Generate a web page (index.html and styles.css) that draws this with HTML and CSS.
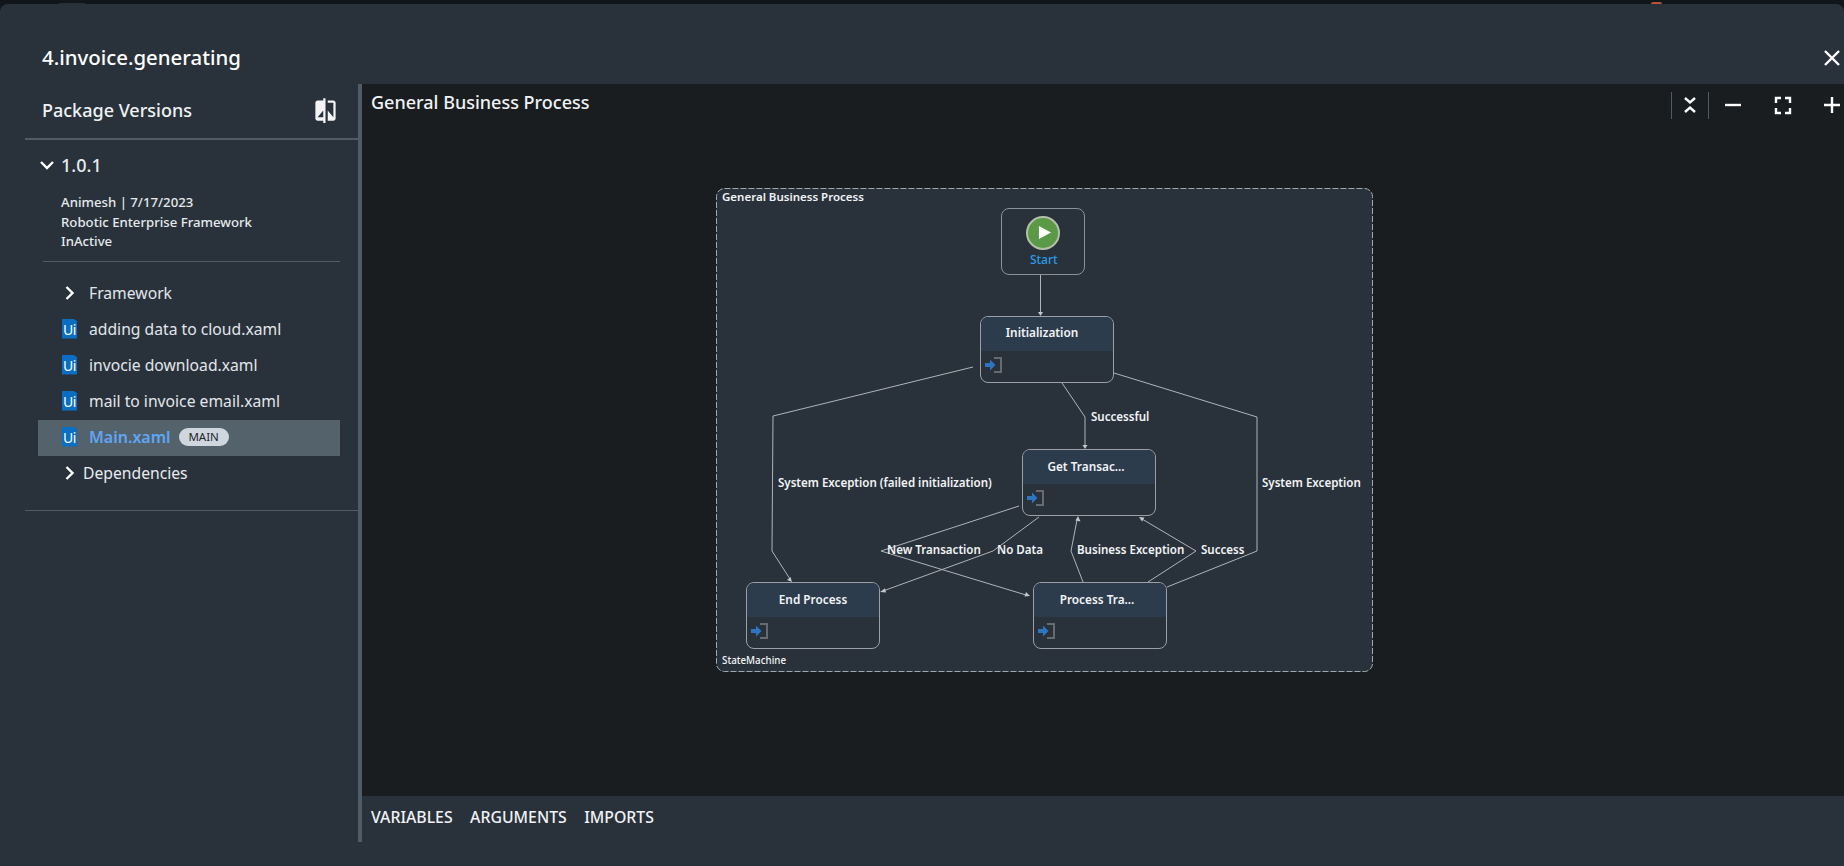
FILE: index.html
```html
<!DOCTYPE html>
<html>
<head>
<meta charset="utf-8">
<title>4.invoice.generating</title>
<link rel="stylesheet" href="styles.css">
</head>
<body>
<div class="backdrop"><span class="blob-grey"></span><span class="blob-red"></span></div>
<div class="modal">
	<div class="modal-head">
		<div class="modal-title">4.invoice.generating</div>
		<svg class="ico" viewBox="0 0 24 24"><path d="M5 5l14 14M19 5L5 19" class="line-w2"/></svg>
	</div>
	<div class="modal-body">
		<div class="sidebar">
			<div class="side-head">
				<span>Package Versions</span>
				<svg class="compare" viewBox="0 0 24 24"><path d="M10 3H5c-1.1 0-2 .9-2 2v14c0 1.1.9 2 2 2h5v2h2V1h-2v2zm0 15H5l5-6v6zm9-15h-5v2h5v13l-5-6v9h5c1.1 0 2-.9 2-2V5c0-1.1-.9-2-2-2z"/></svg>
			</div>
			<div class="version">
				<svg class="chev-down" viewBox="0 0 14 10"><path d="M1 2l6 6 6-6" class="line-w2"/></svg>
				<span>1.0.1</span>
			</div>
			<div class="details">
				<div>Animesh | 7/17/2023</div>
				<div>Robotic Enterprise Framework</div>
				<div>InActive</div>
			</div>
			<div class="rule-short"></div>
			<div class="tree">
				<div class="row">
					<svg class="chev-right" viewBox="0 0 12 16"><path d="M3 2l6 6-6 6" class="line-w2"/></svg>
					<span>Framework</span>
				</div>
				<div class="row"><span class="ui-file">Ui</span><span>adding data to cloud.xaml</span></div>
				<div class="row"><span class="ui-file">Ui</span><span>invocie download.xaml</span></div>
				<div class="row"><span class="ui-file">Ui</span><span>mail to invoice email.xaml</span></div>
				<div class="row selected"><span class="ui-file">Ui</span><span class="main-name">Main.xaml</span><span class="badge">MAIN</span></div>
				<div class="row row-deps">
					<svg class="chev-right" viewBox="0 0 12 16"><path d="M3 2l6 6-6 6" class="line-w2"/></svg>
					<span>Dependencies</span>
				</div>
			</div>
			<div class="rule-long"></div>
		</div>
		<div class="main">
			<div class="canvas">
				<div class="canvas-head">
					<div class="canvas-title">General Business Process</div>
					<div class="toolbar">
						<div class="tool-fold">
							<svg class="ico" viewBox="0 0 24 24"><path d="M7 5l5 4.500L17 5M7 19l5-4.500 5 4.500" class="line-w2"/></svg>
						</div>
						<svg class="ico" viewBox="0 0 24 24"><path d="M3 12h16" class="line-w2"/></svg>
						<svg class="ico" viewBox="0 0 24 24"><path d="M10 5H5v5M14 5h5v5M10 20H5v-5M14 20h5v-5" class="line-w2"/></svg>
						<svg class="ico" viewBox="0 0 24 24"><path d="M4 12h16M12 4v16" class="line-w2"/></svg>
					</div>
				</div>

				<div class="frame">
					<svg class="edges" viewBox="716 188 657 484">
						<rect class="frame-line" x="716.500" y="188.500" width="656" height="483" rx="8"/>

						<polyline points="1040.500,275 1040.500,313"/>
						<polyline points="973,367 773,416 772,551 790,579"/>
						<polyline points="1114,373 1257,417 1257,551 1167,587"/>
						<polyline points="1062,383 1085,417 1085,446"/>
						<polyline points="1019,506 881,551 1026,595"/>
						<polyline points="1039,517 993,551 883,591"/>
						<polyline points="1083,582 1071,551 1077,520"/>
						<polyline points="1148,582 1196,551 1142,519"/>

						<path class="head" d="M1040.500 316l-2.500-4h5z"/>
						<path class="head" d="M792 582l-5-2 3.500-3z"/>
						<path class="head" d="M1085 449l-2.500-4h5z"/>
						<path class="head" d="M1030 596l-5.500 .5 1.500-4.500z"/>
						<path class="head" d="M880 592l5-3.800 1 4.200z"/>
						<path class="head" d="M1078 516l2.500 5.500-5-1z"/>
						<path class="head" d="M1139 517l5.500 .5-2.500 4z"/>

						<text x="1091" y="420.500">Successful</text>
						<text x="778" y="486.500">System Exception (failed initialization)</text>
						<text x="1262" y="486.500">System Exception</text>
						<text x="887" y="553.500">New Transaction</text>
						<text x="997" y="553.500">No Data</text>
						<text x="1077" y="553.500">Business Exception</text>
						<text x="1201" y="553.500">Success</text>
					</svg>

					<div class="frame-label">General Business Process</div>
					<div class="frame-foot">StateMachine</div>

					<div class="start">
						<span class="start-dot"><svg viewBox="0 0 14 14"><path d="M1 0l13 7-13 7z"/></svg></span>
						<span class="start-text">Start</span>
					</div>

					<div class="node node-init">
						<div class="node-head shift-6">Initialization</div>
						<svg class="entry" viewBox="0 0 18 16"><path class="entry-door" d="M9 1h7v14H9"/><path class="entry-arrow" d="M0 6h5V2.500L10.500 8 5 13.500V10H0z"/></svg>
					</div>
					<div class="node node-get">
						<div class="node-head shift-3">Get Transac...</div>
						<svg class="entry" viewBox="0 0 18 16"><path class="entry-door" d="M9 1h7v14H9"/><path class="entry-arrow" d="M0 6h5V2.500L10.500 8 5 13.500V10H0z"/></svg>
					</div>
					<div class="node node-end">
						<div class="node-head">End Process</div>
						<svg class="entry" viewBox="0 0 18 16"><path class="entry-door" d="M9 1h7v14H9"/><path class="entry-arrow" d="M0 6h5V2.500L10.500 8 5 13.500V10H0z"/></svg>
					</div>
					<div class="node node-proc">
						<div class="node-head shift-3">Process Tra...</div>
						<svg class="entry" viewBox="0 0 18 16"><path class="entry-door" d="M9 1h7v14H9"/><path class="entry-arrow" d="M0 6h5V2.500L10.500 8 5 13.500V10H0z"/></svg>
					</div>
				</div>
			</div>
			<div class="tabs">
				<span>VARIABLES</span>
				<span>ARGUMENTS</span>
				<span>IMPORTS</span>
			</div>
		</div>
	</div>
</div>
</body>
</html>
```

FILE: styles.css
```css
html, body {
	margin: 0;
	height: 100%;
	overflow: hidden;
}
body {
	display: flex;
	flex-direction: column;
	background: #11161a;
	color: #fff;
	font-family: "Noto Sans", sans-serif;
}
svg {
	display: block;
	flex: none;
}
.backdrop {
	height: 4px;
	position: relative;
}
.blob-grey {
	position: absolute;
	left: 59px;
	top: 3px;
	width: 26px;
	height: 1px;
	background: #2a2f33;
}
.blob-red {
	position: absolute;
	left: 1651px;
	top: 2px;
	width: 11px;
	height: 2px;
	border-radius: 5px 5px 0 0;
	background: #b5523a;
}
.modal {
	flex: 1;
	display: flex;
	flex-direction: column;
	background: #29323b;
	border-radius: 8px 8px 0 0;
	min-height: 0;
}
.modal-head {
	height: 80px;
	box-sizing: border-box;
	padding: 28px 0 0 42px;
	display: flex;
	justify-content: space-between;
	align-items: center;
	flex: none;
}
.modal-title {
	font-size: 20.400px;
	font-weight: 500;
	margin-top: -2px;
}
.ico {
	width: 24px;
	height: 24px;
}
.line-w2 {
	fill: none;
	stroke: #fff;
	stroke-width: 2.400;
}
.modal-body {
	flex: 1;
	display: flex;
	margin-bottom: 24px;
	min-height: 0;
}

/* left panel */
.sidebar {
	width: 358px;
	flex: none;
	border-right: 4px solid #4f5c67;
}
.side-head {
	height: 56px;
	box-sizing: border-box;
	margin-left: 25px;
	padding: 0 19px 2px 17px;
	display: flex;
	justify-content: space-between;
	align-items: center;
	border-bottom: 2px solid #4f5c67;
	font-size: 18px;
	font-weight: 500;
	color: #f0f2f4;
}
.compare {
	width: 27px;
	height: 27px;
	fill: #f2f4f6;
}
.version {
	margin: 13px 0 0 40px;
	height: 24px;
	display: flex;
	align-items: center;
	gap: 7px;
	font-size: 18px;
	font-weight: 500;
	color: #e8ebee;
}
.chev-down {
	width: 14px;
	height: 10px;
}
.details {
	margin: 16px 0 0 61px;
	font-size: 13.200px;
	font-weight: 500;
	line-height: 19.500px;
	color: #e6e9ec;
}
.rule-short {
	height: 1px;
	margin: 9px 18px 0 43px;
	background: #4f5c67;
}
.rule-long {
	height: 1px;
	margin: 18px 0 0 25px;
	background: #4f5c67;
}
.tree {
	margin: 14px 18px 0 38px;
}
.row {
	height: 36px;
	box-sizing: border-box;
	padding: 0 0 2px 24px;
	display: flex;
	align-items: center;
	gap: 12px;
	font-size: 15.700px;
	color: #e2e6ea;
}
.chev-right {
	width: 15px;
	height: 16px;
}
.row-deps {
	gap: 6px;
	color: #e8ebee;
}
.ui-file {
	width: 15px;
	height: 20px;
	box-sizing: border-box;
	padding-top: 2px;
	background: #0a6fc2;
	clip-path: polygon(0 0, 72% 0, 100% 12%, 100% 100%, 0 100%);
	color: #fff;
	font-size: 14px;
	line-height: 18px;
	letter-spacing: -.5px;
	text-align: center;
}
.selected {
	background: #54626c;
}
.main-name {
	font-size: 16px;
	font-weight: 600;
	color: #5fa6f5;
}
.badge {
	margin-left: -4px;
	width: 50px;
	height: 18px;
	border-radius: 9px;
	background: #cfd6de;
	color: #1f262c;
	font-size: 11.500px;
	line-height: 18px;
	text-align: center;
}

/* right panel */
.main {
	flex: 1;
	display: flex;
	flex-direction: column;
	min-width: 0;
}
.canvas {
	flex: 1;
	position: relative;
	background: #191d20;
}
.canvas-head {
	display: flex;
	justify-content: space-between;
	padding: 9px 0 0 9px;
}
.canvas-title {
	margin-top: -1px;
	font-size: 18px;
	font-weight: 500;
	line-height: 20px;
	color: #f0f2f4;
}
.toolbar {
	display: flex;
	align-items: center;
	gap: 25px;
	height: 24px;
}
.tool-fold {
	width: 36px;
	height: 27px;
	display: flex;
	align-items: center;
	justify-content: center;
	border-left: 1px solid #4f5c67;
	border-right: 1px solid #4f5c67;
	margin-right: -12px;
}

/* state machine diagram */
.frame {
	position: absolute;
	left: 354px;
	top: 104px;
	width: 657px;
	height: 484px;
	border-radius: 9px;
	background: #29323b;
}
.edges {
	position: absolute;
	left: 0;
	top: 0;
	width: 657px;
	height: 484px;
}
.edges .frame-line {
	fill: none;
	stroke: #a2a9ae;
	stroke-width: 1;
	stroke-dasharray: 6 2;
}
.edges polyline {
	fill: none;
	stroke: #aeb4b9;
	stroke-width: 1;
}
.edges .head {
	fill: #c3c8cc;
}
.edges text {
	fill: #f2f4f6;
	font-size: 11.550px;
	font-weight: 600;
}
.frame-label {
	position: absolute;
	left: 6px;
	top: 1px;
	font-size: 11.500px;
	font-weight: 600;
	line-height: 16px;
	color: #f2f4f6;
}
.frame-foot {
	position: absolute;
	left: 6px;
	bottom: 4px;
	font-size: 9.800px;
	font-weight: 500;
	line-height: 14px;
	color: #f2f4f6;
}
.start {
	position: absolute;
	left: 285px;
	top: 19.500px;
	width: 83.500px;
	height: 67px;
	box-sizing: border-box;
	border: 1px solid #8a9197;
	border-radius: 8px;
	display: flex;
	flex-direction: column;
	align-items: center;
	padding: 7px 0 0 1px;
}
.start-dot {
	width: 34px;
	height: 34px;
	box-sizing: border-box;
	border: 2px solid #b5c0aa;
	border-radius: 50%;
	background: #5a9a46;
	display: flex;
	align-items: center;
	justify-content: center;
}
.start-dot svg {
	width: 13px;
	height: 15px;
	margin-left: 2px;
	fill: #fff;
}
.start-text {
	margin: 1px 0 0 1px;
	font-size: 12px;
	font-weight: 500;
	line-height: 18px;
	color: #2d9be6;
}
.node {
	position: absolute;
	width: 134px;
	height: 67px;
	box-sizing: border-box;
	border: 1px solid #9aa0a5;
	border-radius: 8px;
	overflow: hidden;
}
.node-init {
	left: 264px;
	top: 128px;
}
.node-init .node-head {
	line-height: 31px;
}
.node-get {
	left: 306px;
	top: 261px;
}
.node-end {
	left: 30px;
	top: 394px;
}
.node-proc {
	left: 317px;
	top: 394px;
}
.node-head {
	height: 34px;
	box-sizing: border-box;
	background: #2d3c4d;
	font-size: 11.800px;
	font-weight: 600;
	line-height: 33px;
	text-align: center;
	color: #f2f4f6;
}
.shift-6 {
	padding-right: 10px;
}
.shift-3 {
	padding-right: 6px;
}
.entry {
	width: 18px;
	height: 16px;
	margin: 6px 0 0 4px;
}
.entry-door {
	fill: none;
	stroke: #666b70;
	stroke-width: 2;
}
.entry-arrow {
	fill: #2e74c0;
}

/* bottom tabs */
.tabs {
	height: 46px;
	box-sizing: border-box;
	padding: 0 0 4px 9px;
	flex: none;
	display: flex;
	align-items: center;
	gap: 17.500px;
	font-size: 15.800px;
	font-weight: 500;
	color: #f0f2f4;
}
```
